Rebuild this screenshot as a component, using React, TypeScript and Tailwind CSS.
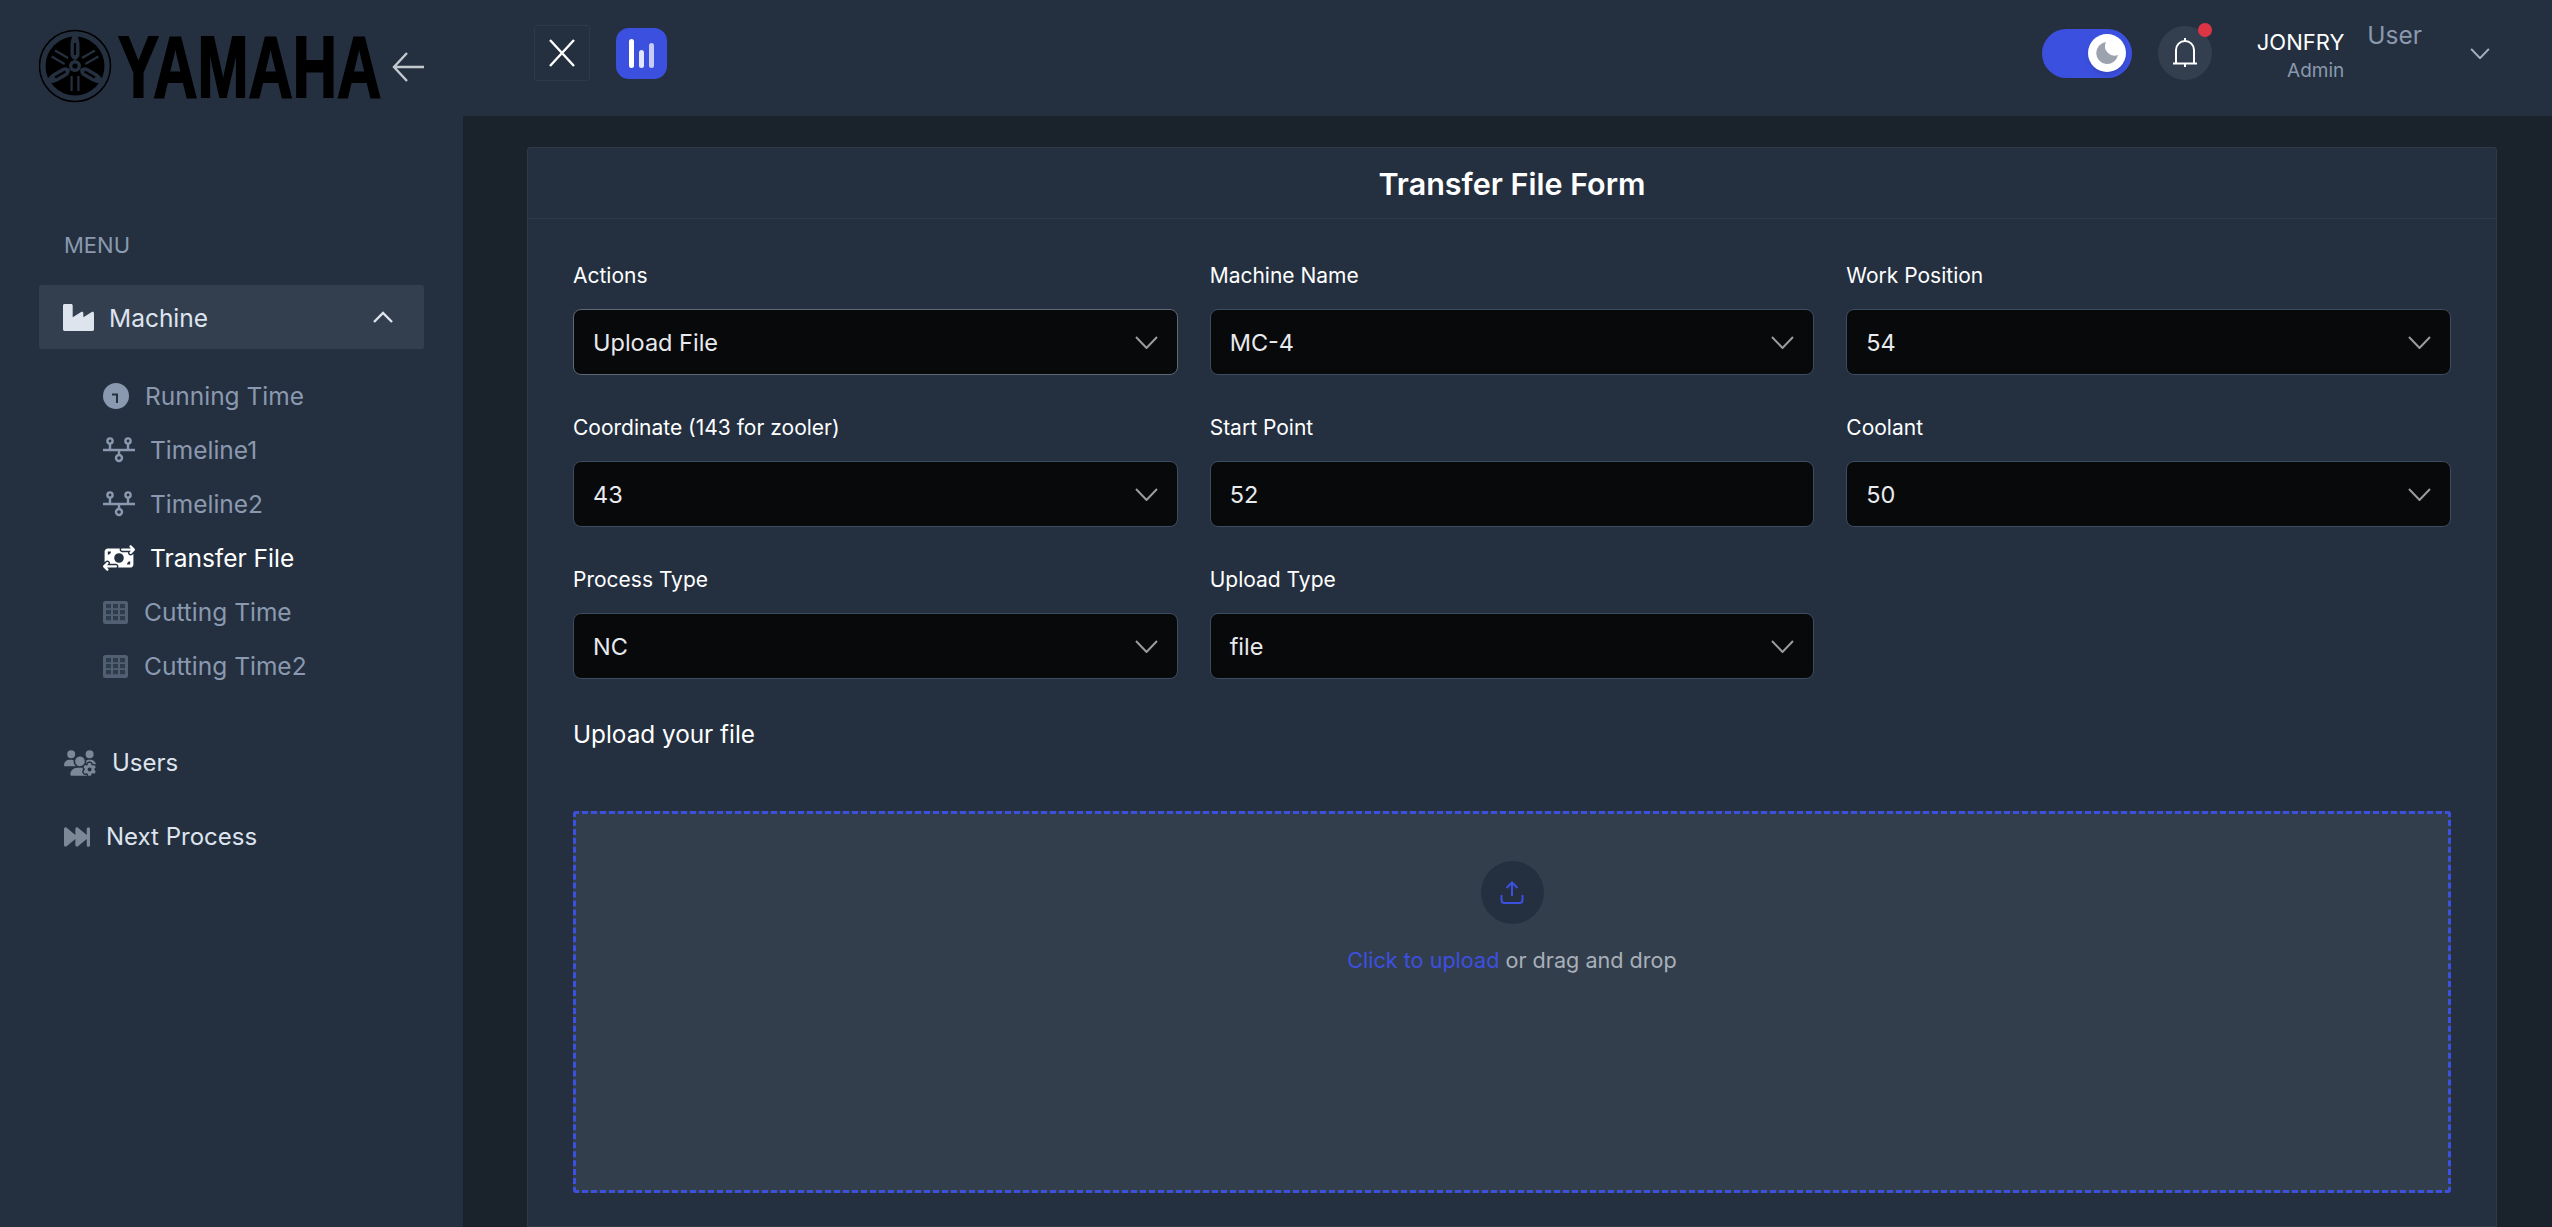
import { FaIndustry } from "react-icons/fa";
import { FaForwardFast, FaMoneyBillTransfer, FaUsersGear } from "react-icons/fa6";

const font = { fontFamily: "Inter, 'Noto Sans', sans-serif" };

function YamahaLogo() {
  const fork = (
    <g>
      <path d="M36 1 Q40.5 9 40.5 14 V24 Q40.5 28 36 30 Q31.5 28 31.5 24 V14 Q31.5 9 36 1 Z" fill="#24303F" />
      <path d="M36 13 V25" stroke="#000" strokeWidth="2.2" />
      <path d="M32.6 46 V61 M39.4 46 V61" stroke="#24303F" strokeWidth="2.2" fill="none" />
    </g>
  );
  return (
    <svg width="345" height="100" viewBox="0 0 345 100" className="shrink-0">
      <g transform="translate(0 14)">
        <circle cx="36" cy="36" r="35.5" fill="none" stroke="#000" strokeWidth="1.5" />
        <circle cx="36" cy="36" r="29.5" fill="#000" />
        {fork}
        <g transform="rotate(120 36 36)">{fork}</g>
        <g transform="rotate(240 36 36)">{fork}</g>
        <circle cx="36" cy="36" r="6" fill="#24303F" />
        <circle cx="36" cy="36" r="2.6" fill="#000" />
      </g>
      <text
        transform="translate(79 81) scale(0.704 1)"
        fontFamily="'Liberation Sans', sans-serif"
        fontWeight="700"
        fontSize="87"
        fill="#000"
        stroke="#000"
        strokeWidth="2"
      >
        YAMAHA
      </text>
    </svg>
  );
}

function ClockIcon() {
  return (
    <svg width="26" height="26" viewBox="0 0 26 26" className="shrink-0">
      <circle cx="13" cy="13" r="13" fill="currentColor" />
      <path d="M9 11.5 H14 V20" fill="none" stroke="#24303F" strokeWidth="2" />
    </svg>
  );
}

function TimelineIcon() {
  return (
    <svg width="32" height="26" viewBox="0 0 32 26" fill="none" stroke="currentColor" strokeWidth="2.4" className="shrink-0">
      <circle cx="7" cy="4" r="2.6" />
      <circle cx="25" cy="4" r="2.6" />
      <circle cx="16" cy="21" r="3" />
      <path d="M0 13 H32 M7 7 V13 M25 7 V13 M16 13 V18" />
    </svg>
  );
}

function TableIcon() {
  return (
    <svg width="25" height="23" viewBox="0 0 25 23" className="shrink-0">
      <rect width="25" height="23" rx="2.5" fill="#525F73" />
      {[3, 9, 15].map((y) => [3, 10, 17].map((x) => <rect key={`${x}-${y}`} x={x} y={y} width="5" height="4.2" fill="#24303F" opacity="0.75" />))}
    </svg>
  );
}

function Chevron({ className = "", weight = 2 }: { className?: string; weight?: number }) {
  return (
    <svg width="23" height="13" viewBox="0 0 23 13" fill="none" stroke="currentColor" strokeWidth={weight} className={className}>
      <path d="M1 1 L11.5 12 L22 1" />
    </svg>
  );
}

function SubItem({ icon, label, active = false, gap }: { icon: React.ReactNode; label: string; active?: boolean; gap: string }) {
  return (
    <div className={`flex h-[54px] items-center text-[24.5px] ${gap} ${active ? "text-white" : "text-[#8A99AF]"}`}>
      {icon}
      <span>{label}</span>
    </div>
  );
}

function Sidebar() {
  return (
    <aside className="flex w-[463px] shrink-0 flex-col bg-[#24303F]">
      <div className="flex h-[116px] items-start pl-[39px] pt-[16px]">
        <YamahaLogo />
        <svg width="32" height="30" viewBox="0 0 32 30" fill="none" stroke="#C4C9D0" strokeWidth="2.4" className="ml-[8px] mt-[36px] shrink-0">
          <path d="M32 15 H2 M15 1 L2 15 L15 29" />
        </svg>
      </div>
      <div className="pl-[64px] pt-[113px] text-[22px] leading-8 text-[#8A99AF]">MENU</div>
      <div className="mx-[39px] mt-[24px] flex h-[64px] items-center rounded-[3px] bg-[#333F4E] pl-6 pr-[31px] text-[#DEE4EE]">
        <FaIndustry size={31} className="shrink-0" />
        <span className="ml-[15px] pt-[3px] text-[24.5px]">Machine</span>
        <svg width="20" height="12" viewBox="0 0 20 12" fill="none" stroke="currentColor" strokeWidth="2.4" className="ml-auto">
          <path d="M1 11 L10 2 L19 11" />
        </svg>
      </div>
      <div className="mt-[20px] pl-[103px]">
        <SubItem gap="gap-4" label="Running Time" icon={<ClockIcon />} />
        <SubItem gap="gap-[15px]" label="Timeline1" icon={<TimelineIcon />} />
        <SubItem gap="gap-[15px]" label="Timeline2" icon={<TimelineIcon />} />
        <SubItem gap="gap-[15px]" active label="Transfer File" icon={<FaMoneyBillTransfer size={32} className="shrink-0" />} />
        <SubItem gap="gap-4" label="Cutting Time" icon={<TableIcon />} />
        <SubItem gap="gap-4" label="Cutting Time2" icon={<TableIcon />} />
      </div>
      <div className="mt-[43px] flex h-[54px] items-center gap-4 pl-[64px] text-[24px] text-[#DEE4EE]">
        <FaUsersGear size={32} className="shrink-0 text-[#7D8896]" />
        <span>Users</span>
      </div>
      <div className="mt-5 flex h-[54px] items-center gap-4 pl-[64px] text-[24px] text-[#DEE4EE]">
        <FaForwardFast size={26} className="shrink-0 text-[#7D8896]" />
        <span>Next Process</span>
      </div>
    </aside>
  );
}

function Header() {
  return (
    <header className="flex h-[116px] shrink-0 items-center bg-[#24303F] pb-[10px] pl-[71px] pr-[62px]">
      <div className="flex h-[56px] w-[56px] items-center justify-center rounded-[3px] border border-[#2E3A47]">
        <svg width="28" height="28" viewBox="0 0 28 28" fill="none" stroke="#fff" strokeWidth="2.4">
          <path d="M2 1 L26 27 M26 1 L2 27" />
        </svg>
      </div>
      <div className="ml-[26px] flex h-[51px] w-[51px] items-end justify-center gap-[5px] rounded-[13px] bg-[#3C50E0] pb-[11px]">
        <span className="h-[29px] w-[5px] rounded-full bg-white" />
        <span className="h-[18px] w-[5px] rounded-full bg-white opacity-85" />
        <span className="h-[25px] w-[5px] rounded-full bg-white opacity-70" />
      </div>

      <div className="ml-auto flex h-[49px] w-[90px] items-center justify-end rounded-full bg-[#3C50E0] pr-[6px]">
        <div className="flex h-[38px] w-[38px] items-center justify-center rounded-full bg-white shadow-md">
          <svg width="24" height="24" viewBox="0 0 24 24">
            <path d="M11 1 A11 11 0 1 0 23 14 A9.5 9.5 0 0 1 11 1 Z" fill="#9CA3AF" />
          </svg>
        </div>
      </div>
      <div className="relative ml-[26px] flex h-[54px] w-[54px] items-center justify-center rounded-full bg-[#333F4E]">
        <svg width="26" height="32" viewBox="0 0 26 32" fill="none" stroke="#fff" strokeWidth="2">
          <path d="M4 26 V13 A9 9 0 0 1 22 13 V26 M1 26.5 H25 M13 1 V4 M13 27 V30" />
        </svg>
        <span className="absolute -top-[3px] right-0 h-[14px] w-[14px] rounded-full bg-[#DC3545]" />
      </div>
      <div className="ml-[45px] mt-[5px] flex flex-col items-end self-center">
        <span className="text-[22px] leading-7 text-white">JONFRY</span>
        <span className="mt-[3px] text-[19px] leading-6 text-[#8A99AF]">Admin</span>
      </div>
      <span className="mb-[36px] ml-[23px] text-[24.5px] leading-8 text-[#8A99AF]">User</span>
      <Chevron weight={2.4} className="ml-[48px] h-[11px] w-[20px] text-[#A6AEB9]" />
    </header>
  );
}

const fields = [
  { label: "Actions", value: "Upload File", focus: true },
  { label: "Machine Name", value: "MC-4" },
  { label: "Work Position", value: "54" },
  { label: "Coordinate (143 for zooler)", value: "43" },
  { label: "Start Point", value: "52", input: true },
  { label: "Coolant", value: "50" },
  { label: "Process Type", value: "NC" },
  { label: "Upload Type", value: "file" },
];

function Field({ label, value, focus, input }: { label: string; value: string; focus?: boolean; input?: boolean }) {
  return (
    <div className="flex flex-col">
      <label className="mb-[22px] h-6 text-[21px] leading-[26px] text-white">{label}</label>
      <div className={`flex h-[66px] items-center justify-between rounded-lg border bg-[#08090B] px-[19px] text-[23.5px] text-[#E8EAED] ${focus ? "border-[#5F6875]" : "border-[#3D4D60]"}`}>
        <span className="pt-[2px]">{value}</span>
        {!input && <Chevron className="text-[#9A9CA0]" />}
      </div>
    </div>
  );
}

function UploadZone() {
  return (
    <div className="flex h-[382px] flex-col items-center rounded-[3px] border-[3px] border-dashed border-[#3C50E0] bg-[#333E4C] pt-[47px]">
      <div className="flex h-[63px] w-[63px] items-center justify-center rounded-full bg-[#24303F]">
        <svg width="24" height="24" viewBox="0 0 24 24" fill="none" stroke="#3C50E0" strokeWidth="2">
          <path d="M12 15 V2 M6.5 7 L12 1.5 L17.5 7 M1.5 14 V19 Q1.5 22 4.5 22 H19.5 Q22.5 22 22.5 19 V14" />
        </svg>
      </div>
      <p className="mt-[20px] text-[21.6px] leading-8 text-[#A8B0BA]">
        <span className="text-[#3C50E0]">Click to upload</span> or drag and drop
      </p>
    </div>
  );
}

export default function App() {
  return (
    <div className="flex h-screen w-full overflow-hidden bg-[#1A222C]" style={font}>
      <Sidebar />
      <div className="flex min-w-0 flex-1 flex-col">
        <Header />
        <main className="flex min-h-0 flex-1 flex-col pl-16 pr-[55px] pt-[31px]">
          <section className="flex-1 rounded-t-[3px] border border-[#2E3A47] bg-[#24303F]">
            <div className="flex h-[71px] items-center justify-center border-b border-[#2E3A47] pt-[2px]">
              <h2 className="text-[30.5px] font-semibold text-white">Transfer File Form</h2>
            </div>
            <div className="px-[45px] pt-[44px]">
              <div className="grid grid-cols-3 gap-x-8 gap-y-10">
                {fields.map((f) => (
                  <Field key={f.label} {...f} />
                ))}
              </div>
              <h3 className="mb-[65px] mt-[43px] h-6 text-[24.3px] leading-6 text-white">Upload your file</h3>
              <UploadZone />
            </div>
          </section>
        </main>
      </div>
    </div>
  );
}
